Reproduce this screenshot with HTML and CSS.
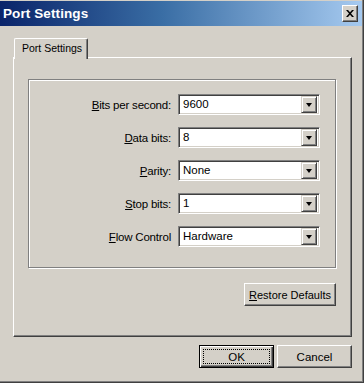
FILE: index.html
```html
<!DOCTYPE html>
<html>
<head>
<meta charset="utf-8">
<link rel="stylesheet" href="styles.css">
</head>
<body>
<div class="window">
  <div class="titlebar">
    <span class="title">Port Settings</span>
    <button class="close" aria-label="Close">
      <svg width="8" height="7" viewBox="0 0 8 7"><path d="M0 0h2l2 2.2L6 0h2L5 3.5 8 7H6L4 4.8 2 7H0l3-3.5z" fill="#000"/></svg>
    </button>
  </div>
  <div class="body">
    <div class="tabs"><div class="tab">Port Settings</div></div>
    <div class="panel">
      <div class="group">
        <div class="row"><span class="label"><u>B</u>its per second:</span><div class="combo"><span class="value">9600</span><span class="arrow"><i></i></span></div></div>
        <div class="row"><span class="label"><u>D</u>ata bits:</span><div class="combo"><span class="value">8</span><span class="arrow"><i></i></span></div></div>
        <div class="row"><span class="label"><u>P</u>arity:</span><div class="combo"><span class="value">None</span><span class="arrow"><i></i></span></div></div>
        <div class="row"><span class="label"><u>S</u>top bits:</span><div class="combo"><span class="value">1</span><span class="arrow"><i></i></span></div></div>
        <div class="row"><span class="label"><u>F</u>low Control</span><div class="combo"><span class="value">Hardware</span><span class="arrow"><i></i></span></div></div>
      </div>
      <div class="restore-row"><button class="btn restore"><u>R</u>estore Defaults</button></div>
    </div>
    <div class="footer">
      <button class="btn ok"><span class="focus">OK</span></button>
      <button class="btn cancel">Cancel</button>
    </div>
  </div>
</div>
</body>
</html>
```

FILE: styles.css
```css
* { box-sizing: border-box; }
html, body { margin: 0; padding: 0; }
body {
  width: 364px;
  height: 383px;
  background: #d4d0c8;
  font-family: "Liberation Sans", Arial, sans-serif;
  font-size: 11px;
  color: #000;
  overflow: hidden;
}
.window {
  width: 364px;
  height: 383px;
  border-right: 1px solid #404040;
  border-bottom: 1px solid #404040;
  box-shadow: inset -1px -1px 0 #808080;
  display: flex;
  flex-direction: column;
}
.titlebar {
  height: 26px;
  margin-right: 1px;
  background: linear-gradient(to right, #0a246a 0%, #3a6ea5 45%, #a6caf0 100%);
  display: flex;
  align-items: center;
  justify-content: space-between;
  padding: 0 4px 0 3px;
  border-top: 1px solid #d4d0c8;
}
.title {
  color: #fff;
  font-weight: bold;
  font-size: 13.5px;
  letter-spacing: 0.1px;
}
.close {
  width: 16px;
  height: 17px;
  padding: 0;
  background: #d4d0c8;
  border: 1px solid;
  border-color: #fff #404040 #404040 #fff;
  box-shadow: inset -1px -1px 0 #808080;
  display: flex;
  align-items: center;
  justify-content: center;
}
.body {
  flex: 1;
  padding: 12px 10px 0 13px;
  display: flex;
  flex-direction: column;
}
.tabs {
  display: flex;
  height: 20px;
  position: relative;
  z-index: 1;
  margin-bottom: -1px;
}
.tab {
  margin-left: 1px;
  width: 74px;
  height: 21px;
  background: #d4d0c8;
  border-left: 1px solid #fff;
  border-top: 1px solid #fff;
  border-right: 1px solid #404040;
  box-shadow: inset -1px 0 0 #808080;
  border-top-left-radius: 2px;
  border-top-right-radius: 2px;
  padding: 3px 0 0 7px;
  font-size: 10.5px;
}
.panel {
  height: 280px;
  width: 339px;
  border-left: 1px solid #fff;
  border-top: 1px solid #fff;
  border-right: 1px solid #404040;
  border-bottom: 1px solid #404040;
  box-shadow: inset -1px -1px 0 #808080;
  padding: 21px 14px 0 14px;
  display: flex;
  flex-direction: column;
}
.group {
  width: 308px;
  height: 189px;
  border: 1px solid #808080;
  box-shadow: 1px 1px 0 #fff, inset 1px 1px 0 #fff;
  padding: 14px 15px 0 0;
  display: flex;
  flex-direction: column;
  gap: 12px;
}
.row {
  display: grid;
  grid-template-columns: 142px 142px;
  column-gap: 7px;
  align-items: center;
  height: 21px;
}
.label {
  text-align: right;
  font-size: 11.5px;
  letter-spacing: -0.2px;
}
.combo {
  height: 21px;
  background: #fff;
  border: 1px solid;
  border-color: #808080 #fff #fff #808080;
  box-shadow: inset 1px 1px 0 #404040, inset -1px -1px 0 #d4d0c8;
  display: flex;
  align-items: center;
  justify-content: space-between;
  padding: 2px 2px 2px 4px;
}
.value { line-height: 15px; font-size: 11.5px; }
.arrow {
  width: 16px;
  height: 17px;
  background: #d4d0c8;
  border: 1px solid;
  border-color: #d4d0c8 #404040 #404040 #d4d0c8;
  box-shadow: inset 1px 1px 0 #fff, inset -1px -1px 0 #808080;
  display: flex;
  align-items: center;
  justify-content: center;
}
.arrow i {
  width: 0;
  height: 0;
  border-left: 3.5px solid transparent;
  border-right: 3.5px solid transparent;
  border-top: 4px solid #000;
}
.restore-row {
  display: flex;
  justify-content: flex-end;
  margin-top: 15px;
  padding-right: 1px;
}
.btn {
  font-family: "Liberation Sans", Arial, sans-serif;
  font-size: 11px;
  color: #000;
  background: #d4d0c8;
  border: 1px solid;
  border-color: #fff #404040 #404040 #fff;
  box-shadow: inset -1px -1px 0 #808080;
  padding: 0;
  height: 23px;
  display: flex;
  align-items: center;
  justify-content: center;
}
.restore { width: 92px; }
.footer {
  display: flex;
  justify-content: flex-end;
  gap: 3px;
  margin-top: 8px;
  width: 339px;
}
.ok {
  width: 75px;
  border: 1px solid #000;
  box-shadow: inset 1px 1px 0 #fff, inset -1px -1px 0 #404040, inset -2px -2px 0 #808080;
  padding: 3px;
}
.focus {
  flex: 1;
  align-self: stretch;
  border: 1px dotted #000;
  display: flex;
  align-items: center;
  justify-content: center;
  font-size: 11.5px;
}
.cancel { width: 75px; font-size: 11.5px; }
```
